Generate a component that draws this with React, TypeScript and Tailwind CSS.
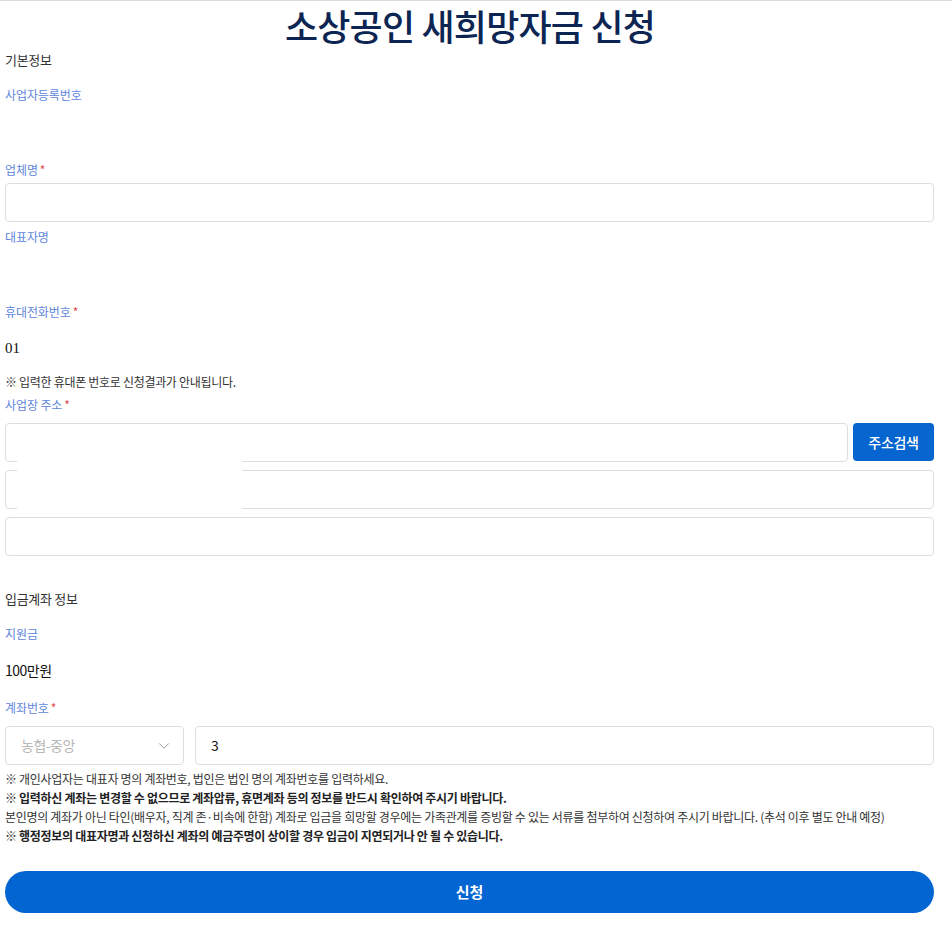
import { ChevronDown } from "lucide-react";

const font = { fontFamily: '"Noto Sans CJK KR", "Noto Sans", sans-serif' };

function Label({ text, required, className = "" }: { text: string; required?: boolean; className?: string }) {
  return (
    <p className={`text-[12px] leading-[20px] text-[#5f86dc] tracking-[-0.1px] ${className}`}>
      {text}
      {required && <span className="text-[#e5484d] ml-[2px]">*</span>}
    </p>
  );
}

function Field({ className = "" }: { className?: string }) {
  return <div className={`h-[39px] rounded-[4px] border border-[#dedede] bg-white ${className}`} />;
}

export default function App() {
  return (
    <div style={font} className="min-h-[937px] bg-white border-t border-[#dcdcdc] text-[#222]">
      <h1 className="pr-[12px] text-[36px] leading-[48px] font-medium text-center text-[#0c2552] tracking-[-0.8px]">
        소상공인 새희망자금 신청
      </h1>

      <div className="ml-[5px] w-[929px]">
        {/* 기본정보 */}
        <p className="mt-[1px] text-[13px] leading-[20px] text-[#333] tracking-[-0.3px]">기본정보</p>
        <Label text="사업자등록번호" className="mt-[15px]" />

        <Label text="업체명" required className="mt-[55px]" />
        <Field className="mt-[3px]" />

        <Label text="대표자명" className="mt-[5px]" />

        <Label text="휴대전화번호" required className="mt-[55px]" />
        <p
          style={{ fontFamily: '"Liberation Serif", serif' }}
          className="mt-[16px] text-[15px] leading-[20px] text-[#111]"
        >
          01
        </p>
        <p className="mt-[15px] text-[12px] leading-[18px] text-[#333] tracking-[-0.3px]">
          ※ 입력한 휴대폰 번호로 신청결과가 안내됩니다.
        </p>

        <Label text="사업장 주소" required className="mt-[4px]" />
        <div className="relative mt-[8px] flex flex-col gap-2">
          <div className="flex gap-[5px]">
            <Field className="flex-1" />
            <button className="h-[38px] w-[81px] rounded-[4px] bg-[#0765cf] text-white text-[14px] font-medium tracking-[-0.3px]">
              주소검색
            </button>
          </div>
          <Field />
          <Field />
          {/* 가려진 영역 */}
          <div className="absolute left-[12px] top-[37px] h-[57px] w-[225px] bg-white" />
        </div>

        {/* 입금계좌 정보 */}
        <p className="mt-[33px] text-[13px] leading-[20px] text-[#333] tracking-[-0.3px]">입금계좌 정보</p>
        <Label text="지원금" className="mt-[15px]" />
        <p className="mt-[16px] text-[14px] leading-[20px] text-[#111] tracking-[-0.5px]">100만원</p>

        <Label text="계좌번호" required className="mt-[18px]" />
        <div className="mt-[8px] flex gap-[11px]">
          <div className="h-[39px] w-[179px] rounded-[4px] border border-[#dedede] flex items-center justify-between pl-[15px] pr-[10px]">
            <span className="text-[14px] text-[#b8b8b8] tracking-[-0.5px]">농협-중앙</span>
            <ChevronDown className="w-[18px] h-[18px] text-[#9a9a9a]" strokeWidth={1.3} />
          </div>
          <div className="h-[39px] flex-1 rounded-[4px] border border-[#dedede] flex items-center pl-[15px]">
            <span className="text-[14px] text-[#111]">3</span>
          </div>
        </div>

        <div className="mt-[4px] text-[12px] leading-[19px] text-[#333] tracking-[-0.3px]">
          <p>※ 개인사업자는 대표자 명의 계좌번호, 법인은 법인 명의 계좌번호를 입력하세요.</p>
          <p className="font-bold text-[#222]">
            ※ 입력하신 계좌는 변경할 수 없으므로 계좌압류, 휴면계좌 등의 정보를 반드시 확인하여 주시기 바랍니다.
          </p>
          <p>
            본인명의 계좌가 아닌 타인(배우자, 직계 존·비속에 한함) 계좌로 입금을 희망할 경우에는 가족관계를 증빙할 수 있는 서류를 첨부하여 신청하여 주시기 바랍니다. (추석 이후 별도 안내 예정)
          </p>
          <p className="font-bold text-[#222]">
            ※ 행정정보의 대표자명과 신청하신 계좌의 예금주명이 상이할 경우 입금이 지연되거나 안 될 수 있습니다.
          </p>
        </div>

        <button className="mt-[26px] h-[42px] w-full rounded-full bg-[#0265d2] text-white text-[15px] font-bold">
          신청
        </button>
      </div>
    </div>
  );
}
